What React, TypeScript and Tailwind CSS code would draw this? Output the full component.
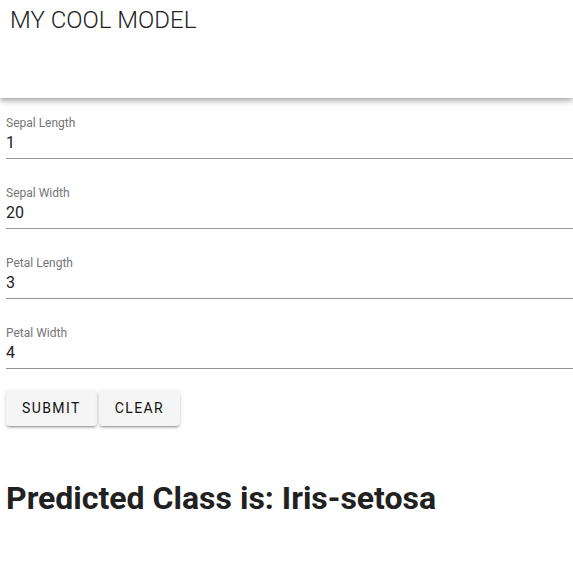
import React from 'react';

const fields = [
    { label: 'Sepal Length', value: '1' },
    { label: 'Sepal Width', value: '20' },
    { label: 'Petal Length', value: '3' },
    { label: 'Petal Width', value: '4' },
];

const btn =
    'h-[36px] rounded-[4px] bg-[#f5f5f5] px-4 text-[14px] font-normal tracking-[0.1em] text-[#111] shadow-[0px_3px_1px_-2px_rgba(0,0,0,0.2),0px_2px_2px_0px_rgba(0,0,0,0.14),0px_1px_5px_0px_rgba(0,0,0,0.12)]';

const App: React.FC = () => {
    return (
        <div className="min-h-[564px] bg-white font-['Roboto',sans-serif] text-[#212121]">
            <header className="h-[98px] bg-white pl-[10px] pt-[4px] shadow-[0px_2px_4px_-1px_rgba(0,0,0,0.2),0px_4px_5px_0px_rgba(0,0,0,0.14),0px_1px_10px_0px_rgba(0,0,0,0.12)] relative">
                <h1 className="text-[24px] leading-[32px] font-light">MY COOL MODEL</h1>
            </header>
            <main className="pl-[6px] pt-[19px]">
                <div className="flex flex-col gap-[28px]">
                    {fields.map((f) => (
                        <div key={f.label} className="flex flex-col border-b border-[#949494] pb-[6px]">
                            <span className="text-[12px] leading-[12px] text-[#757575]">{f.label}</span>
                            <span className="mt-[4px] text-[16px] leading-[19px]">{f.value}</span>
                        </div>
                    ))}
                </div>
                <div className="mt-[21px] flex gap-[2px]">
                    <button className={btn}>SUBMIT</button>
                    <button className={btn}>CLEAR</button>
                </div>
                <h2 className="mt-[51px] text-[32px] leading-[42px] font-bold">Predicted Class is: Iris-setosa</h2>
            </main>
        </div>
    );
};

export default App;
